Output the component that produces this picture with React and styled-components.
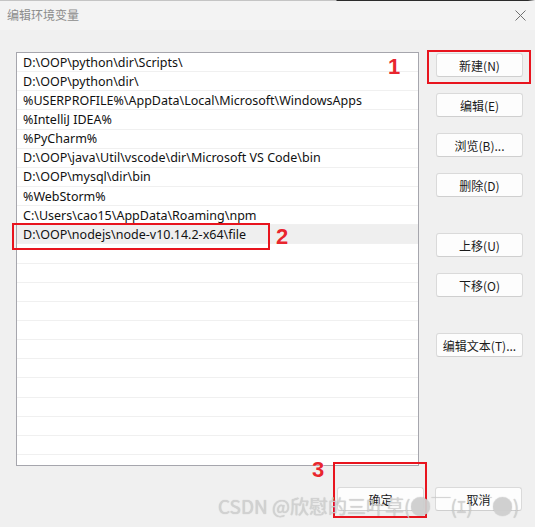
import React from "react";
import styled, { createGlobalStyle } from "styled-components";

const Global = createGlobalStyle`
  html, body { margin: 0; padding: 0; background: #f0f0f0; }
  body { font-family: "Noto Sans", "Noto Sans CJK SC", sans-serif; }
`;

const Window = styled.div`
  position: relative;
  width: 535px;
  height: 527px;
  overflow: hidden;
  background: #f0f0f0;
  display: flex;
  flex-direction: column;
`;

const TopEdge = styled.div`
  height: 1px;
  flex: none;
  background: linear-gradient(to right, #c4c4c4 0, #c4c4c4 336px, #2b2b2b 337px, #2b2b2b 528px, #f0f0f0 535px);
`;

const TitleBar = styled.div`
  height: 29px;
  flex: none;
  background: #f3f3f3;
  display: flex;
  align-items: center;
  justify-content: space-between;
  padding: 0 9px 0 7px;
`;

const Title = styled.span`
  font-family: "Noto Sans CJK SC", sans-serif;
  font-size: 12px;
  color: #8c8c8c;
  line-height: 1;
  margin-top: -1px;
`;

const Close = styled.svg`
  width: 11px;
  height: 11px;
  margin-top: -1px;
`;

const Body = styled.div`
  display: flex;
  padding: 22px 0 0 16px;
  gap: 17px;
  align-items: flex-start;
`;

const ListBox = styled.div`
  width: 401px;
  height: 412px;
  border: 1px solid #a6a6ad;
  background: #fff;
  overflow: hidden;
`;

const Row = styled.div`
  height: 19.15px;
  box-sizing: border-box;
  border-bottom: 1px solid #f0f0f0;
  padding-left: 6px;
  display: flex;
  align-items: center;
  font-family: "Noto Sans", "Noto Sans CJK SC", sans-serif;
  font-size: 12.5px;
  color: #111;
  white-space: nowrap;
  background: ${(p) => (p.$selected ? "#efefef" : "#fff")};
`;

const Side = styled.div`
  display: flex;
  flex-direction: column;
  padding-top: 1px;
`;

const Button = styled.button`
  width: 87px;
  height: 24px;
  box-sizing: border-box;
  border: 1px solid #dadada;
  border-bottom-color: #cfcfcf;
  border-radius: 3px;
  background: #fdfdfd;
  font-family: "Noto Sans CJK SC", sans-serif;
  font-size: 12px;
  color: #1a1a1a;
  padding: 0;
  margin-top: ${(p) => p.$gap || 0}px;
  display: flex;
  align-items: center;
  justify-content: center;
`;

const Footer = styled.div`
  display: flex;
  justify-content: flex-end;
  gap: 11px;
  padding: 21px 13px 0 0;
`;

const Mark = styled.div`
  position: absolute;
  left: ${(p) => p.$x}px;
  top: ${(p) => p.$y}px;
  width: ${(p) => p.$w}px;
  height: ${(p) => p.$h}px;
  border: 2px solid #e8141e;
  box-sizing: border-box;
  pointer-events: none;
`;

const Num = styled.div`
  position: absolute;
  left: ${(p) => p.$x}px;
  top: ${(p) => p.$y}px;
  font-family: "Liberation Sans", Arial, sans-serif;
  font-weight: bold;
  font-size: 22px;
  line-height: 1;
  color: #e8262e;
  text-shadow: 0 0 1px #fff;
`;

const Watermark = styled.div`
  position: absolute;
  left: 218px;
  top: 494px;
  display: flex;
  align-items: center;
  font-family: "Noto Sans CJK SC", sans-serif;
  font-size: 19px;
  line-height: 24px;
  white-space: nowrap;
  color: rgba(212, 212, 212, 0.9);
  text-shadow: 0 0 1px rgba(0, 0, 0, 0.22);
  pointer-events: none;
`;

const Dot = styled.span`
  display: inline-block;
  width: 19px;
  height: 19px;
  border-radius: 50%;
  margin: 0 1px;
  background: rgba(205, 205, 205, 0.95);
  box-shadow: 0 0 1px rgba(0, 0, 0, 0.3);
`;

const Grip = styled.div`
  position: absolute;
  right: 2px;
  bottom: 2px;
  width: 3px;
  height: 3px;
  background: radial-gradient(#b8b8b8 40%, transparent 45%) 0 0 / 2px 2px;
`;

const rows = [
  "D:\\OOP\\python\\dir\\Scripts\\",
  "D:\\OOP\\python\\dir\\",
  "%USERPROFILE%\\AppData\\Local\\Microsoft\\WindowsApps",
  "%IntelliJ IDEA%",
  "%PyCharm%",
  "D:\\OOP\\java\\Util\\vscode\\dir\\Microsoft VS Code\\bin",
  "D:\\OOP\\mysql\\dir\\bin",
  "%WebStorm%",
  "C:\\Users\\cao15\\AppData\\Roaming\\npm",
  "D:\\OOP\\nodejs\\node-v10.14.2-x64\\file",
];

const sideButtons = [
  { label: "新建(N)", gap: 0 },
  { label: "编辑(E)", gap: 16 },
  { label: "浏览(B)...", gap: 16 },
  { label: "删除(D)", gap: 16 },
  { label: "上移(U)", gap: 36 },
  { label: "下移(O)", gap: 16 },
  { label: "编辑文本(T)...", gap: 36 },
];

export default function App() {
  const all = [...rows, ...Array(12).fill("")];
  return (
    <>
      <Global />
      <Window>
        <TopEdge />
        <TitleBar>
          <Title>编辑环境变量</Title>
          <Close viewBox="0 0 11 11">
            <path d="M0.5 0.5 L10.5 10.5 M10.5 0.5 L0.5 10.5" stroke="#707070" strokeWidth="1" fill="none" />
          </Close>
        </TitleBar>
        <Body>
          <ListBox>
            {all.map((r, i) => (
              <Row key={i} $selected={i === 9}>
                {r}
              </Row>
            ))}
          </ListBox>
          <Side>
            {sideButtons.map((b) => (
              <Button key={b.label} $gap={b.gap}>
                {b.label}
              </Button>
            ))}
          </Side>
        </Body>
        <Footer>
          <Button>确定</Button>
          <Button>取消</Button>
        </Footer>
        <Mark $x={427} $y={50} $w={104} $h={34} />
        <Num $x={388} $y={56}>1</Num>
        <Mark $x={12} $y={223} $w={258} $h={27} />
        <Num $x={276} $y={226}>2</Num>
        <Mark $x={333} $y={462} $w={94} $h={56} />
        <Num $x={312} $y={459}>3</Num>
        <Watermark>
          CSDN @欣慰的三叶草(<Dot />￣(ｴ)￣<Dot />)
        </Watermark>
        <Grip />
      </Window>
    </>
  );
}
